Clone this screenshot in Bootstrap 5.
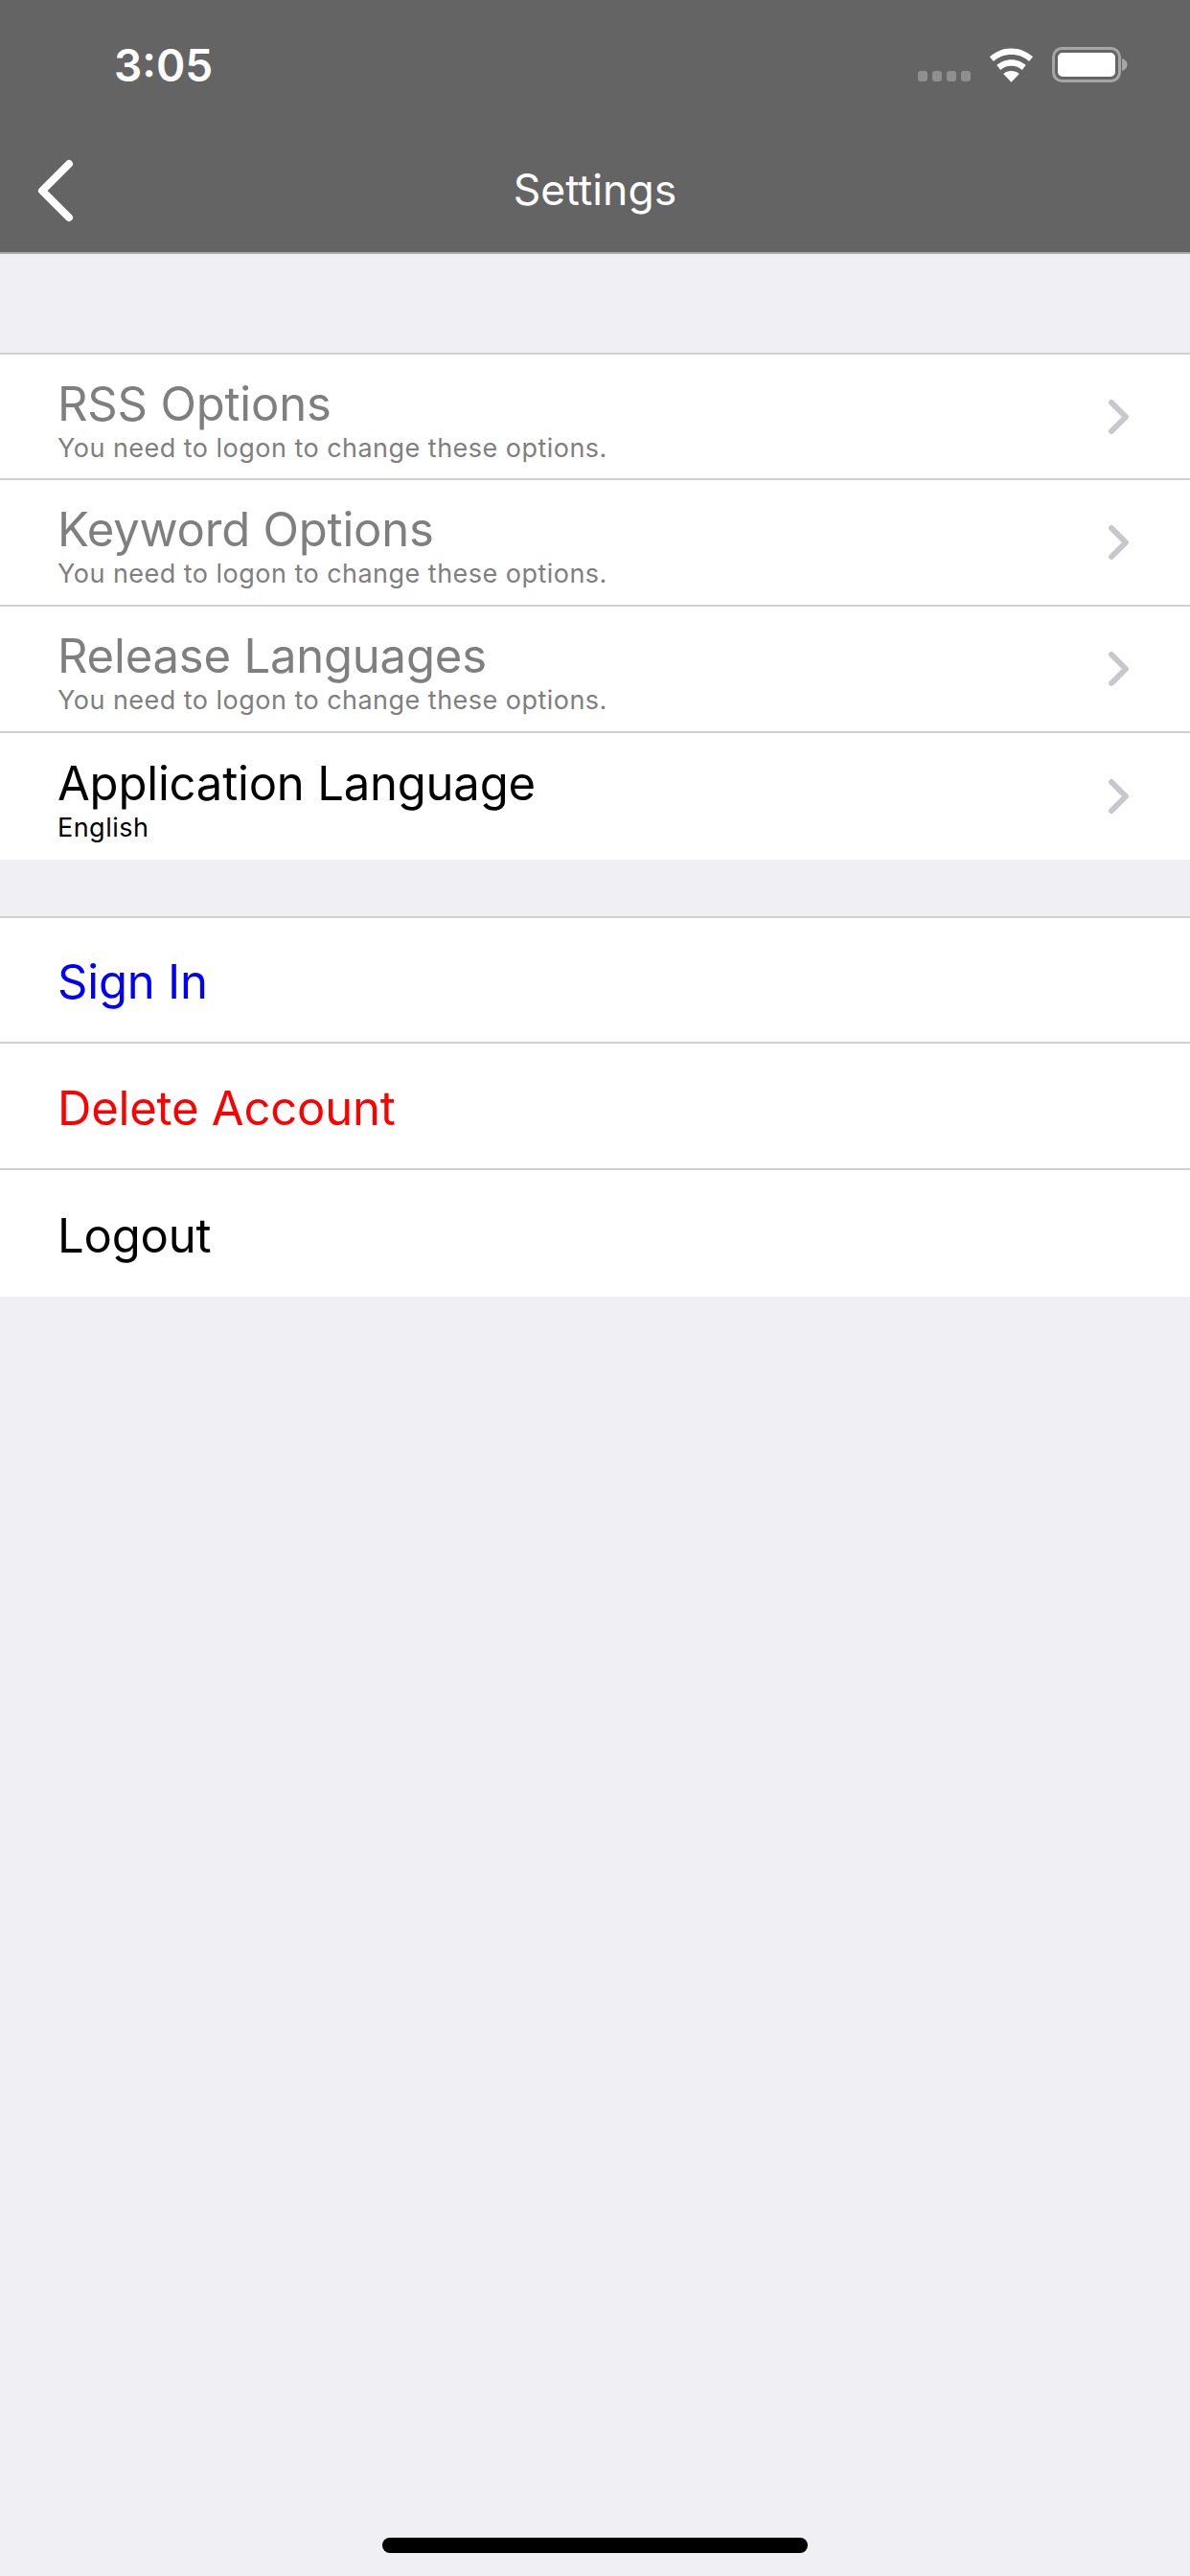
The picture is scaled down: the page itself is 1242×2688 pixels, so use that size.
<!DOCTYPE html>
<html lang="en">
<head>
  <meta charset="UTF-8">
  <meta name="viewport" content="width=device-width, initial-scale=1">
  <title>Settings</title>
  <link href="https://cdn.jsdelivr.net/npm/bootstrap@5.3.0/dist/css/bootstrap.min.css" rel="stylesheet">
  <style>
    body { background: #efeff4; font-family: Inter, "Liberation Sans", sans-serif; min-height: 2688px; position: relative; }
    .app-head { background: #646464; height: 265px; border-bottom: 2px solid #a9a9ab; color: #fff; }
    .status-row { height: 132px; padding: 0 65px 0 119px; }
    .status-time { font-size: 46px; font-weight: 600; line-height: 1; margin-top: 3px; }
    .status-icons { gap: 19px; margin-top: 3px; }
    .status-dots { margin-bottom: 1px; }
    .nav-row { height: 131px; padding-left: 38px; position: relative; }
    .nav-row svg { margin-top: 2px; }
    .nav-title { position: absolute; left: 0; right: 0; top: 36px; text-align: center; font-size: 44.5px; line-height: 60px; }
    .sec-one { margin-top: 103px; }
    .sec-two { margin-top: 59px; }
    .set-list { border-top: 2px solid #d0d0d1; border-radius: 0; background: #fff; }
    .list-group-flush > .set-row { height: 132px; padding: 0 62px 0 60px; border-width: 0 0 2px; border-color: #d0d0d1; }
    .list-group-flush > .set-row:first-child { height: 131px; }
    .set-text { padding-top: 6px; }
    .set-row > .set-title { padding-top: 5px; }
    .set-title { font-size: 49px; line-height: 60px; letter-spacing: -.2px; color: #000; }
    .set-sub { font-size: 27px; line-height: 32px; letter-spacing: .47px; color: #000; }
    .row-off .set-title { color: #7f7f7f; }
    .row-off .set-sub { color: #7f7f7f; }
    .list-group-flush > .set-row .tone-blue { color: #0000ff; }
    .list-group-flush > .set-row .tone-red { color: #ff0000; }
    .home-bar { position: absolute; left: 399px; bottom: 24px; width: 444px; height: 16px; border-radius: 8px; background: #000; }
  </style>
</head>
<body>
  <header class="app-head">
    <div class="status-row d-flex align-items-center justify-content-between">
      <span class="status-time">3:05</span>
      <div class="status-icons d-flex align-items-end">
        <svg class="status-dots" width="55" height="11" viewBox="0 0 55 11" fill="#8f8f8f"><rect x="0" y="0" width="10" height="11" rx="3"/><rect x="15" y="0" width="10" height="11" rx="3"/><rect x="30" y="0" width="10" height="11" rx="3"/><rect x="45" y="0" width="10" height="11" rx="3"/></svg>
        <svg width="47" height="36" viewBox="0 0 48 36" fill="#fff"><path d="M24 0C15 0 7 3.500 1 9l4 5c5-4.500 11.500-7.200 19-7.200S38 9.500 43 14l4-5C41 3.500 33 0 24 0z"/><path d="M24 12c-6 0-11.500 2.300-15.500 6l4 5c3-2.700 7-4.300 11.500-4.300s8.500 1.600 11.500 4.300l4-5C35.500 14.300 30 12 24 12z"/><path d="M24 24c-3.300 0-6.300 1.200-8.500 3.200L24 36l8.500-8.800C30.300 25.200 27.300 24 24 24z"/></svg>
        <svg width="79" height="37" viewBox="0 0 79 37"><rect x="1.500" y="1.500" width="69" height="34" rx="9" fill="none" stroke="#a6a6a6" stroke-width="3"/><rect x="6" y="6" width="60" height="25" rx="5" fill="#fff"/><path d="M73 12c3.500 1 5.500 3.500 5.500 6.500S76.500 24 73 25z" fill="#a6a6a6"/></svg>
      </div>
    </div>
    <div class="nav-row d-flex align-items-center">
      <svg width="40" height="66" viewBox="0 0 40 66" fill="none" stroke="#fff" stroke-width="8" stroke-linecap="round" stroke-linejoin="round"><path d="M34 5L6 33l28 28"/></svg>
      <div class="nav-title">Settings</div>
    </div>
  </header>

  <main>
    <div class="list-group list-group-flush set-list sec-one">
      <a class="list-group-item set-row row-off d-flex align-items-center justify-content-between">
        <div class="set-text"><div class="set-title">RSS Options</div><div class="set-sub">You need to logon to change these options.</div></div>
        <svg width="24" height="38" viewBox="0 0 24 38" fill="none" stroke="#c7c7cc" stroke-width="6" stroke-linecap="round" stroke-linejoin="round"><path d="M4 4l15 15L4 34"/></svg>
      </a>
      <a class="list-group-item set-row row-off d-flex align-items-center justify-content-between">
        <div class="set-text"><div class="set-title">Keyword Options</div><div class="set-sub">You need to logon to change these options.</div></div>
        <svg width="24" height="38" viewBox="0 0 24 38" fill="none" stroke="#c7c7cc" stroke-width="6" stroke-linecap="round" stroke-linejoin="round"><path d="M4 4l15 15L4 34"/></svg>
      </a>
      <a class="list-group-item set-row row-off d-flex align-items-center justify-content-between">
        <div class="set-text"><div class="set-title">Release Languages</div><div class="set-sub">You need to logon to change these options.</div></div>
        <svg width="24" height="38" viewBox="0 0 24 38" fill="none" stroke="#c7c7cc" stroke-width="6" stroke-linecap="round" stroke-linejoin="round"><path d="M4 4l15 15L4 34"/></svg>
      </a>
      <a class="list-group-item set-row d-flex align-items-center justify-content-between">
        <div class="set-text"><div class="set-title">Application Language</div><div class="set-sub">English</div></div>
        <svg width="24" height="38" viewBox="0 0 24 38" fill="none" stroke="#c7c7cc" stroke-width="6" stroke-linecap="round" stroke-linejoin="round"><path d="M4 4l15 15L4 34"/></svg>
      </a>
    </div>

    <div class="list-group list-group-flush set-list sec-two">
      <a class="list-group-item set-row d-flex align-items-center"><span class="set-title tone-blue">Sign In</span></a>
      <a class="list-group-item set-row d-flex align-items-center"><span class="set-title tone-red">Delete Account</span></a>
      <a class="list-group-item set-row d-flex align-items-center"><span class="set-title">Logout</span></a>
    </div>
  </main>

  <div class="home-bar"></div>
  <script src="https://cdn.jsdelivr.net/npm/bootstrap@5.3.0/dist/js/bootstrap.bundle.min.js"></script>
</body>
</html>
